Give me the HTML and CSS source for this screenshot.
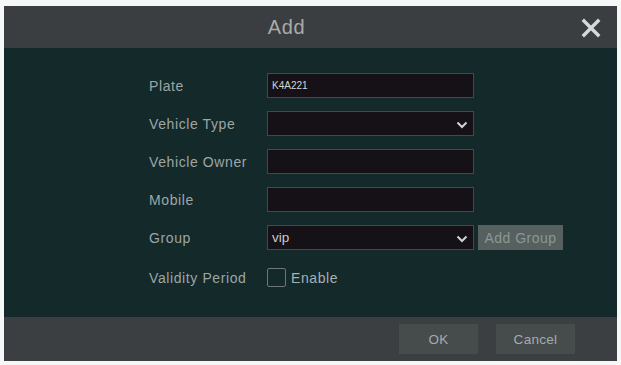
FILE: index.html
```html
<!DOCTYPE html>
<html>
<head>
<meta charset="utf-8">
<link rel="stylesheet" href="styles.css">
</head>
<body>
<div class="dialog">
  <div class="header">
    <div class="title">Add</div>
    <div class="close">
      <svg width="20" height="20" viewBox="0 0 20 20"><path d="M3 3 L17 17 M17 3 L3 17" stroke="#d8dada" stroke-width="3.4" stroke-linecap="square"/></svg>
    </div>
  </div>
  <div class="body">
    <div class="form">
      <div class="row"><div class="label">Plate</div><div class="field input"><span class="val small">K4A221</span></div></div>
      <div class="row"><div class="label">Vehicle Type</div><div class="field input select"><span class="val"></span><svg class="chev" width="12" height="8" viewBox="0 0 12 8"><path d="M1.5 1.5 L6 6 L10.5 1.5" fill="none" stroke="#d0d4d4" stroke-width="2"/></svg></div></div>
      <div class="row"><div class="label">Vehicle Owner</div><div class="field input"></div></div>
      <div class="row"><div class="label">Mobile</div><div class="field input"></div></div>
      <div class="row"><div class="label">Group</div><div class="field input select"><span class="val">vip</span><svg class="chev" width="12" height="8" viewBox="0 0 12 8"><path d="M1.5 1.5 L6 6 L10.5 1.5" fill="none" stroke="#d0d4d4" stroke-width="2"/></svg></div><div class="addgroup">Add Group</div></div>
      <div class="row checkrow"><div class="label">Validity Period</div><div class="check"><span class="box"></span><span class="enable">Enable</span></div></div>
    </div>
  </div>
  <div class="footer">
    <div class="btn">OK</div>
    <div class="btn">Cancel</div>
  </div>
</div>
</body>
</html>
```
FILE: styles.css
```css
html, body {
  margin: 0;
  padding: 0;
  background: #f6f8f8;
}
body {
  font-family: "Liberation Sans", Arial, sans-serif;
  width: 621px;
  height: 365px;
  overflow: hidden;
}
.dialog {
  margin: 6px 4px 0 4px;
  width: 613px;
  height: 355px;
  display: flex;
  flex-direction: column;
}
.header {
  height: 42px;
  background: #3b3e40;
  display: flex;
  align-items: center;
  position: relative;
}
.title {
  flex: 1;
  text-align: center;
  color: #a7abac;
  font-size: 20px;
  letter-spacing: 0.6px;
  padding-right: 48px;
  padding-top: 1px;
}
.close {
  position: absolute;
  right: 16px;
  top: 12px;
  width: 20px;
  height: 20px;
}
.body {
  flex: 1;
  background: #13292a;
  padding-top: 25px;
}
.form {
  margin-left: 145px;
  display: flex;
  flex-direction: column;
  gap: 13px;
}
.row {
  display: flex;
  align-items: center;
  height: 25px;
}
.checkrow {
  margin-top: 2px;
}
.label {
  width: 118px;
  color: #9ea6a5;
  font-size: 14px;
  letter-spacing: 0.6px;
}
.field {
  width: 201px;
  height: 23px;
  background: #151116;
  border: 1px solid #3d4c4a;
  display: flex;
  align-items: center;
  padding-left: 4px;
  box-sizing: content-box;
  position: relative;
}
.val {
  color: #c8cccc;
  font-size: 13.5px;
}
.val.small {
  font-size: 10px;
  color: #d4d6d6;
}
.chev {
  position: absolute;
  right: 5px;
  top: 9px;
}
.addgroup {
  margin-left: 4px;
  width: 85px;
  height: 25px;
  background: #56605e;
  color: #8c9796;
  font-size: 14px;
  letter-spacing: 0.5px;
  display: flex;
  align-items: center;
  justify-content: center;
}
.check {
  display: flex;
  align-items: center;
  gap: 5px;
}
.box {
  border: 1px solid #6d7776;
  border-radius: 2px;
  box-sizing: border-box;
  width: 19px;
  height: 19px;
}
.enable {
  color: #a8b0af;
  font-size: 14px;
  letter-spacing: 0.6px;
}
.footer {
  height: 44px;
  background: #3c3f41;
  display: flex;
  align-items: center;
  justify-content: flex-end;
  gap: 18px;
  padding-right: 42px;
}
.btn {
  width: 79px;
  height: 30px;
  background: #464b4c;
  color: #a5abab;
  font-size: 13.5px;
  letter-spacing: 0.3px;
  display: flex;
  align-items: center;
  justify-content: center;
}
```
